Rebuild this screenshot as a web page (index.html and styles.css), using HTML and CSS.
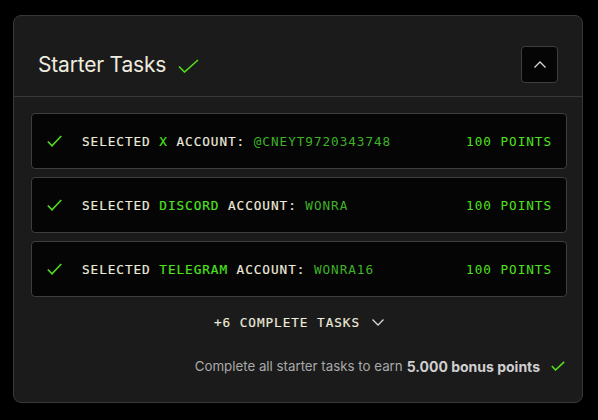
FILE: index.html
```html
<!DOCTYPE html>
<html lang="en">
<head>
    <meta charset="UTF-8">
    <meta name="viewport" content="width=device-width, initial-scale=1.0">
    <title>Starter Tasks</title>
    <link rel="stylesheet" href="styles.css">
</head>
<body>
    <div class="card">
        <div class="card-header">
            <h2 class="title">Starter Tasks
                <svg class="check check-title" viewBox="0 0 21 14"><path d="M1 7.5 L6.5 13 L20 1"/></svg>
            </h2>
            <button class="collapse-btn" aria-label="Collapse">
                <svg viewBox="0 0 12 7"><path d="M0.5 6.5 L6 1 L11.5 6.5"/></svg>
            </button>
        </div>

        <div class="card-body">
            <div class="tasks">
                <div class="task">
                    <svg class="check check-row" viewBox="0 0 15 12"><path d="M0.8 6.5 L5 10.8 L14.2 1"/></svg>
                    <span class="task-label">SELECTED <b>X</b> ACCOUNT: <em>@CNEYT9720343748</em></span>
                    <span class="points">100 POINTS</span>
                </div>
                <div class="task">
                    <svg class="check check-row" viewBox="0 0 15 12"><path d="M0.8 6.5 L5 10.8 L14.2 1"/></svg>
                    <span class="task-label">SELECTED <b>DISCORD</b> ACCOUNT: <em>WONRA</em></span>
                    <span class="points">100 POINTS</span>
                </div>
                <div class="task">
                    <svg class="check check-row" viewBox="0 0 15 12"><path d="M0.8 6.5 L5 10.8 L14.2 1"/></svg>
                    <span class="task-label">SELECTED <b>TELEGRAM</b> ACCOUNT: <em>WONRA16</em></span>
                    <span class="points">100 POINTS</span>
                </div>
            </div>

            <button class="more">+6 COMPLETE TASKS
                <svg viewBox="0 0 12 7"><path d="M0.5 0.5 L6 6 L11.5 0.5"/></svg>
            </button>

            <p class="bonus">Complete all starter tasks to earn <strong>5.000 bonus points</strong>
                <svg class="check check-bonus" viewBox="0 0 14 10"><path d="M0.8 5 L4.5 9 L13.2 0.8"/></svg>
            </p>
        </div>
    </div>
</body>
</html>
```

FILE: styles.css
```css
body {
    margin: 0;
    background: #000;
    font-family: Inter, "Noto Sans", sans-serif;
}
.card {
    width: 568px;
    margin: 15px 0 0 13px;
    background: #1b1b1b;
    border: 1px solid #383838;
    border-radius: 8px;
}
.card-header {
    display: flex;
    align-items: center;
    justify-content: space-between;
    padding: 30px 24px 13px 24px;
    border-bottom: 1px solid #383838;
}
.title {
    display: flex;
    align-items: center;
    gap: 12px;
    margin: 0;
    font-size: 21px;
    font-weight: 400;
    color: #efebdf;
    letter-spacing: -0.2px;
}
.check path {
    fill: none;
    stroke: #52dc1c;
    stroke-width: 1.6;
}
.check-title {
    width: 21px;
    height: 14px;
    margin-top: 2px;
}
.collapse-btn {
    width: 37px;
    height: 37px;
    padding: 0;
    background: #050505;
    border: 1px solid #3e3e3e;
    border-radius: 4px;
    display: flex;
    align-items: center;
    justify-content: center;
}
.collapse-btn svg, .more svg {
    width: 12px;
    height: 7px;
}
.collapse-btn path, .more path {
    fill: none;
    stroke: #d8d8d8;
    stroke-width: 1.3;
}
.card-body {
    padding: 16px 15px 26px 17px;
}
.tasks {
    display: flex;
    flex-direction: column;
    gap: 8px;
}
.task {
    display: flex;
    align-items: center;
    height: 54px;
    padding: 0 14px 0 15px;
    background: #050505;
    border: 1px solid #3e3e3e;
    border-radius: 4px;
    font-family: "DejaVu Sans Mono", monospace;
    font-size: 12.7px;
    letter-spacing: 0.95px;
}
.check-row {
    width: 15px;
    height: 12px;
    margin-right: 20px;
}
.task-label {
    flex: 1;
    color: #eeeadc;
    -webkit-text-stroke: 0.15px currentColor;
}
.task-label b {
    color: #4fe31d;
    font-weight: 400;
}
.task-label em {
    font-style: normal;
    color: #3eb325;
    -webkit-text-stroke: 0;
}
.points {
    color: #4fe31d;
}
.more {
    display: flex;
    align-items: center;
    gap: 12px;
    margin: 15px auto 0 auto;
    padding: 0;
    height: 20px;
    background: none;
    border: none;
    font-family: "DejaVu Sans Mono", monospace;
    font-size: 12.7px;
    letter-spacing: 0.95px;
    color: #eeeadc;
    -webkit-text-stroke: 0.15px currentColor;
}
.bonus {
    display: flex;
    align-items: center;
    justify-content: flex-end;
    margin: 24px 2px 0 0;
    height: 20px;
    font-size: 13.3px;
    color: #a9a9a9;
}
.bonus strong {
    margin-left: 4px;
    font-size: 14px;
    font-weight: 700;
    color: #cfcfcf;
}
.check-bonus {
    width: 14px;
    height: 10px;
    margin-left: 11px;
}
```
